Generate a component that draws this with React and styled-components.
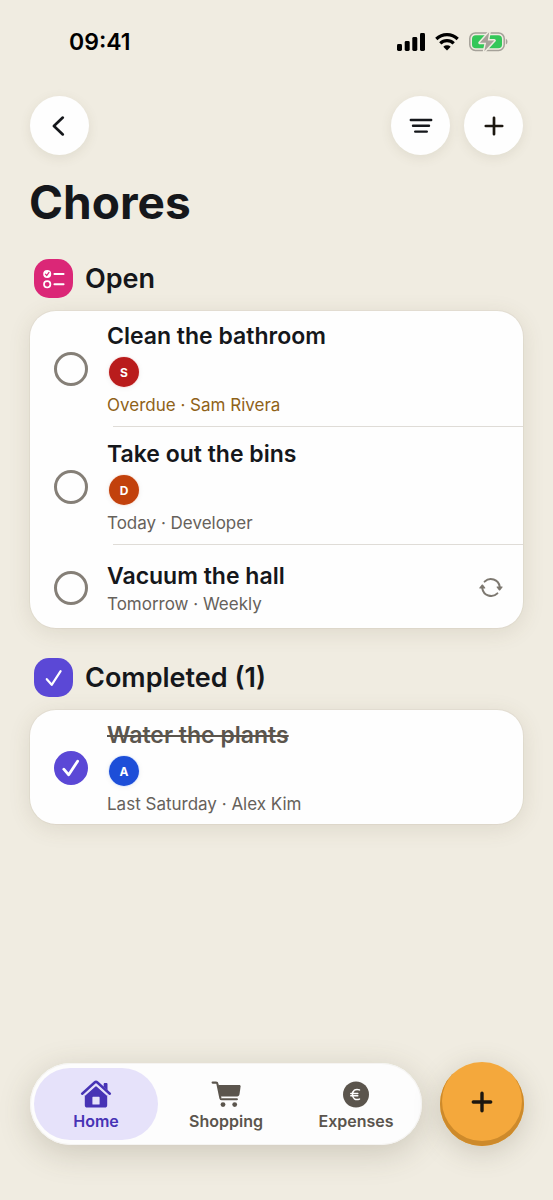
import React, { useState } from "react";
import styled, { createGlobalStyle } from "styled-components";

const initialChores = [
  { id: 1, title: "Clean the bathroom", initial: "S", color: "#b91c1c", ring: "#fae9e9", meta: "Overdue · Sam Rivera", overdue: true, done: false },
  { id: 2, title: "Take out the bins", initial: "D", color: "#c2410c", ring: "#fbece5", meta: "Today · Developer", done: false },
  { id: 3, title: "Vacuum the hall", meta: "Tomorrow · Weekly", repeats: true, done: false },
  { id: 4, title: "Water the plants", initial: "A", color: "#1d4ed8", ring: "#e3ecfd", meta: "Last Saturday · Alex Kim", done: true },
];

const SignalIcon = () => (
  <svg width="28" height="18" viewBox="0 0 28 18" aria-hidden="true">
    <rect x="0" y="11" width="5" height="7" rx="1.4" />
    <rect x="7.7" y="8" width="5" height="10" rx="1.4" />
    <rect x="15.3" y="4" width="5" height="14" rx="1.4" />
    <rect x="23" y="0" width="5" height="18" rx="1.4" />
  </svg>
);

const WifiIcon = () => (
  <svg width="24" height="18" viewBox="0 0 24 18" aria-hidden="true">
    <g fill="none" stroke="#000" strokeWidth="3.2">
      <path d="M1.3 6a15.4 15.4 0 0 1 21.4 0" />
      <path d="M5.3 10.300a9.500 9.500 0 0 1 13.400 0" />
    </g>
    <path d="M12 17.400 8.300 13.700a5.400 5.400 0 0 1 7.400 0z" />
  </svg>
);

const BatteryIcon = () => (
  <svg width="39" height="20" viewBox="0 0 39 20" aria-hidden="true">
    <rect x="0.8" y="1" width="34.400" height="17.400" rx="5.600" fill="none" stroke="#a5a199" strokeWidth="1.500" />
    <path d="M36.800 6.800c2.200.8 2.200 5 0 5.800z" fill="#a5a199" />
    <rect x="3" y="3.200" width="30" height="13" rx="3.800" fill="#34c759" />
    <path d="M20.200.300 10.800 10.800h6.300L15.300 19.200l10-10.700h-6.500z" fill="#a5a199" stroke="#f0ece1" strokeWidth="3" strokeLinejoin="round" />
    <path d="M20.200.300 10.800 10.800h6.300L15.300 19.200l10-10.700h-6.500z" fill="#a5a199" />
  </svg>
);

const BackIcon = () => (
  <svg width="24" height="24" viewBox="0 0 24 24" aria-hidden="true">
    <path d="M14.800 3.600 5.900 12l8.900 8.400" fill="none" stroke="#15171b" strokeWidth="2.700" strokeLinecap="round" strokeLinejoin="round" />
  </svg>
);

const FilterIcon = () => (
  <svg width="24" height="24" viewBox="0 0 24 24" aria-hidden="true">
    <path d="M1.800 6h20.400M4 11.800h16M6.200 17.600h11.600" fill="none" stroke="#15171b" strokeWidth="2.400" strokeLinecap="round" />
  </svg>
);

const PlusIcon = ({ heavy }) => (
  <svg width="24" height="24" viewBox="0 0 24 24" aria-hidden="true">
    <path
      d={heavy ? "M12 3.300v17.400M3.300 12h17.400" : "M12 3.800v16.400M3.800 12h16.400"}
      fill="none"
      stroke="#1c1710"
      strokeWidth={heavy ? 3.4 : 2.7}
      strokeLinecap="round"
    />
  </svg>
);

const ChecklistIcon = () => (
  <svg width="24" height="24" viewBox="0 0 24 24" fill="none" aria-hidden="true">
    <circle cx="5.200" cy="7" r="4" fill="#fff" />
    <path d="m3.400 7.200 1.300 1.400 2.300-3.200" stroke="#db2777" strokeWidth="1.200" strokeLinecap="round" strokeLinejoin="round" />
    <circle cx="5.200" cy="17.300" r="3.200" stroke="#fff" strokeWidth="1.700" />
    <path d="M12.400 7h9.200M12.400 17.300h9.200" stroke="#fff" strokeWidth="1.900" strokeLinecap="round" />
  </svg>
);

const CheckIcon = ({ weight }) => (
  <svg width="20" height="20" viewBox="0 0 20 20" aria-hidden="true">
    <path d="m2.800 11.200 4.900 5.600 8.900-13.600" fill="none" stroke="#fff" strokeWidth={weight} strokeLinecap="round" strokeLinejoin="round" />
  </svg>
);

const RepeatIcon = () => (
  <svg width="24" height="24" viewBox="0 0 24 24" aria-hidden="true">
    <path d="M5.600 5.600a8.900 8.900 0 0 1 15.100 5M18.400 17.400A8.900 8.900 0 0 1 3.300 12.400" fill="none" stroke="#7d7870" strokeWidth="2" strokeLinecap="round" />
    <path d="M18.300 10.400h4.600c.7 0 .9.600.5 1.100l-2.200 2.700c-.4.500-.9.500-1.300 0l-2.100-2.700c-.4-.5-.2-1.100.5-1.100zM1 12.600h4.600c.7 0 .9-.6.5-1.100L4 8.800c-.4-.5-.9-.5-1.300 0L.5 11.500c-.4.500-.2 1.100.5 1.100z" fill="#7d7870" />
  </svg>
);

const HomeIcon = () => (
  <svg width="32" height="28" viewBox="0 0 32 28" aria-hidden="true">
    <path d="M2.200 13.700 14.600 2.500a2.100 2.100 0 0 1 2.800 0L29.800 13.700" fill="none" stroke="#4733b5" strokeWidth="2.500" strokeLinecap="round" strokeLinejoin="round" />
    <path d="M23.700 4.200c0-.8.400-1.200 1.100-1.200h1.600c.7 0 1.100.4 1.100 1.200v6l-3.800-3.400z" fill="#4733b5" />
    <path
      fillRule="evenodd"
      d="M4.800 14.900 16 5.200l11.200 9.700v10.300c0 1.600-.9 2.400-2.400 2.400H7.200c-1.500 0-2.400-.8-2.400-2.400zM12.400 17.400v6.600c0 .4.200.6.600.6h6c.4 0 .6-.2.600-.6v-6.600c0-.4-.2-.6-.6-.6h-6c-.4 0-.6.200-.6.600z"
      fill="#4733b5"
    />
    <path d="M4.600 15.300 14.700 6.200a1.900 1.900 0 0 1 2.600 0l10.100 9.100" fill="none" stroke="#e6e2fa" strokeWidth="1.400" />
  </svg>
);

const CartIcon = () => (
  <svg width="32" height="28" viewBox="0 0 32 28" fill="#5b554d" aria-hidden="true">
    <path d="M2.600 2.600h3.500c.7 0 1.200.4 1.300 1.100L10.400 18.200c.2.700.7 1.100 1.500 1.100h15" fill="none" stroke="#5b554d" strokeWidth="2.100" strokeLinecap="round" />
    <path d="M8.300 5h20.900c1 0 1.500.7 1.400 1.600l-1.100 7.700c-.2 1.300-1 2-2.300 2.100L10.300 16.600z" />
    <circle cx="13" cy="24.600" r="2.400" />
    <circle cx="24.700" cy="24.600" r="2.400" />
  </svg>
);

const EuroIcon = () => (
  <svg width="32" height="28" viewBox="0 0 32 28" aria-hidden="true">
    <circle cx="16" cy="14.500" r="13" fill="#5b554d" />
    <path d="M19.500 9.900c-4.200-1.600-7 .9-7 4.600s2.800 6.200 7 4.600M10.800 13.400h7M10.800 15.700h7" fill="none" stroke="#fff" strokeWidth="1.500" strokeLinecap="round" />
  </svg>
);

const tabs = [
  { name: "Home", Icon: HomeIcon },
  { name: "Shopping", Icon: CartIcon },
  { name: "Expenses", Icon: EuroIcon },
];

const ChoreRow = ({ chore, onToggle }) => (
  <Item>
    <Row>
      <Toggle>
        <Checkbox
          type="checkbox"
          id={`chore-${chore.id}`}
          checked={chore.done}
          onChange={() => onToggle(chore.id)}
        />
        {chore.done && <CheckIcon weight={2.8} />}
      </Toggle>
      <Details>
        <ChoreTitle htmlFor={`chore-${chore.id}`} $done={chore.done}>{chore.title}</ChoreTitle>
        {chore.initial && <Avatar $color={chore.color} $ring={chore.ring}>{chore.initial}</Avatar>}
        <Meta $overdue={chore.overdue}>{chore.meta}</Meta>
      </Details>
      {chore.repeats && <RepeatIcon />}
    </Row>
  </Item>
);

const App = () => {
  const [chores, setChores] = useState(initialChores);
  const [activeTab, setActiveTab] = useState("Home");

  const toggleChore = (id) => {
    setChores((prev) => prev.map((c) => (c.id === id ? { ...c, done: !c.done } : c)));
  };

  const open = chores.filter((c) => !c.done);
  const completed = chores.filter((c) => c.done);

  return (
    <Screen>
      <GlobalStyle />
      <StatusBar>
        <Time>09:41</Time>
        <StatusIcons>
          <SignalIcon />
          <WifiIcon />
          <BatteryIcon />
        </StatusIcons>
      </StatusBar>
      <Toolbar>
        <RoundButton aria-label="Back"><BackIcon /></RoundButton>
        <ToolbarGroup>
          <RoundButton aria-label="Filter"><FilterIcon /></RoundButton>
          <RoundButton aria-label="Add chore"><PlusIcon /></RoundButton>
        </ToolbarGroup>
      </Toolbar>
      <Content>
        <PageTitle>Chores</PageTitle>
        <Section>
          <SectionHeader>
            <SectionIcon $color="#db2777"><ChecklistIcon /></SectionIcon>
            <SectionTitle>Open</SectionTitle>
          </SectionHeader>
          <Card>
            {open.map((chore) => (
              <ChoreRow key={chore.id} chore={chore} onToggle={toggleChore} />
            ))}
          </Card>
        </Section>
        <Section>
          <SectionHeader>
            <SectionIcon $color="#5b48d6"><CheckIcon weight={2.2} /></SectionIcon>
            <SectionTitle>Completed ({completed.length})</SectionTitle>
          </SectionHeader>
          <Card>
            {completed.map((chore) => (
              <ChoreRow key={chore.id} chore={chore} onToggle={toggleChore} />
            ))}
          </Card>
        </Section>
      </Content>
      <BottomBar>
        <TabBar>
          {tabs.map(({ name, Icon }) => (
            <Tab key={name} $active={name === activeTab} onClick={() => setActiveTab(name)}>
              <Icon />
              {name}
            </Tab>
          ))}
        </TabBar>
        <AddButton aria-label="Add"><PlusIcon heavy /></AddButton>
      </BottomBar>
    </Screen>
  );
};

const GlobalStyle = createGlobalStyle`
  * {
    box-sizing: border-box;
  }

  body {
    margin: 0;
    background-color: #f0ece1;
    font-family: Inter, "Liberation Sans", sans-serif;
    color: #15171b;
  }

  button {
    font-family: inherit;
    border: none;
    padding: 0;
    cursor: pointer;
  }

  svg {
    flex-shrink: 0;
  }
`;

const Screen = styled.div`
  display: flex;
  flex-direction: column;
  min-height: 100vh;
`;

const StatusBar = styled.div`
  display: flex;
  align-items: center;
  justify-content: space-between;
  height: 84px;
  padding: 0 45px 0 69px;
`;

const Time = styled.div`
  font-size: 23px;
  font-weight: 600;
  color: #000;
`;

const StatusIcons = styled.div`
  display: flex;
  align-items: center;
  gap: 10px;
`;

const Toolbar = styled.header`
  display: flex;
  justify-content: space-between;
  padding: 12px 30px 0;
`;

const ToolbarGroup = styled.div`
  display: flex;
  gap: 14px;
`;

const RoundButton = styled.button`
  display: flex;
  align-items: center;
  justify-content: center;
  width: 59px;
  height: 59px;
  border-radius: 50%;
  background-color: #fefefe;
  box-shadow: 0 3px 12px rgba(90, 80, 50, 0.1);
`;

const Content = styled.main`
  flex: 1;
  padding: 17px 29px 0;
`;

const PageTitle = styled.h1`
  margin: 0 0 27px;
  font-size: 46px;
  line-height: 60px;
  font-weight: 700;
`;

const Section = styled.section`
  margin: 0 1px 30px;
`;

const SectionHeader = styled.div`
  display: flex;
  align-items: center;
  gap: 12px;
  padding-left: 4px;
  margin-bottom: 13px;
`;

const SectionIcon = styled.div`
  display: flex;
  align-items: center;
  justify-content: center;
  width: 39px;
  height: 39px;
  border-radius: 15px;
  background-color: ${({ $color }) => $color};
`;

const SectionTitle = styled.h2`
  margin: 0;
  font-size: 27px;
  line-height: 32px;
  font-weight: 600;
`;

const Card = styled.ul`
  margin: 0;
  padding: 0;
  list-style: none;
  border-radius: 26px;
  background-color: #fefefe;
  box-shadow: 0 0 0 1px rgba(120, 110, 80, 0.06), 0 4px 22px rgba(90, 80, 50, 0.13);
`;

const Row = styled.div`
  display: flex;
  align-items: center;
  min-height: 83px;
  padding: 11px 20px 11px 24px;
`;

const Item = styled.li`
  & + &::before {
    content: "";
    display: block;
    height: 1px;
    margin-left: 83px;
    background-color: #dfdcd7;
  }

  & + & ${Row} {
    padding-top: 13px;
  }

  &:last-child ${Row} {
    padding-bottom: 10px;
  }
`;

const Toggle = styled.div`
  display: grid;
  place-items: center;
  margin-right: 19px;

  > * {
    grid-area: 1 / 1;
  }

  > svg {
    pointer-events: none;
  }
`;

const Checkbox = styled.input`
  appearance: none;
  width: 34px;
  height: 34px;
  margin: 0;
  border: 3px solid #857f77;
  border-radius: 50%;
  cursor: pointer;

  &:checked {
    border-color: #5b48d6;
    background-color: #5b48d6;
  }
`;

const Details = styled.div`
  display: flex;
  flex: 1;
  flex-direction: column;
  align-items: flex-start;
`;

const ChoreTitle = styled.label`
  font-size: 23px;
  line-height: 28px;
  font-weight: 600;
  color: ${({ $done }) => ($done ? "#5b554d" : "#15171b")};
  text-decoration: ${({ $done }) => ($done ? "line-through" : "none")};
`;

const Avatar = styled.span`
  display: flex;
  align-items: center;
  justify-content: center;
  width: 30px;
  height: 30px;
  margin: 7px 0 4px 2px;
  border-radius: 50%;
  font-size: 12px;
  font-weight: 700;
  color: #fff;
  background-color: ${({ $color }) => $color};
  box-shadow: 0 0 0 1px ${({ $ring }) => $ring}, 0 1px 6px rgba(0, 0, 0, 0.06);
`;

const Meta = styled.div`
  margin-top: 4px;
  font-size: 17px;
  line-height: 20px;
  color: ${({ $overdue }) => ($overdue ? "#8f6218" : "#66615b")};
`;

const BottomBar = styled.div`
  position: sticky;
  bottom: 0;
  display: flex;
  align-items: center;
  gap: 18px;
  padding: 20px 29px 54px 30px;
`;

const TabBar = styled.nav`
  display: flex;
  flex: 1;
  gap: 6px;
  height: 82px;
  padding: 5px 4px;
  border-radius: 41px;
  background-color: #fdfdfd;
  box-shadow: inset 0 0 0 1px #f5f4f2, 0 8px 32px rgba(80, 75, 50, 0.22);
`;

const Tab = styled.button`
  display: flex;
  flex: 1;
  flex-direction: column;
  align-items: center;
  justify-content: center;
  gap: 3px;
  padding-top: 3px;
  border-radius: 36px;
  font-size: 16px;
  line-height: 20px;
  font-weight: 600;
  color: ${({ $active }) => ($active ? "#4733b5" : "#5b554d")};
  background-color: ${({ $active }) => ($active ? "#e6e2fa" : "transparent")};
`;

const AddButton = styled.button`
  display: flex;
  align-items: center;
  justify-content: center;
  width: 84px;
  height: 84px;
  padding-bottom: 4px;
  border-radius: 50%;
  background-color: #f4a83c;
  box-shadow: inset 0 -3px 0 2px #cd8a2b, 0 6px 28px rgba(80, 75, 50, 0.22);
`;

export default App;
